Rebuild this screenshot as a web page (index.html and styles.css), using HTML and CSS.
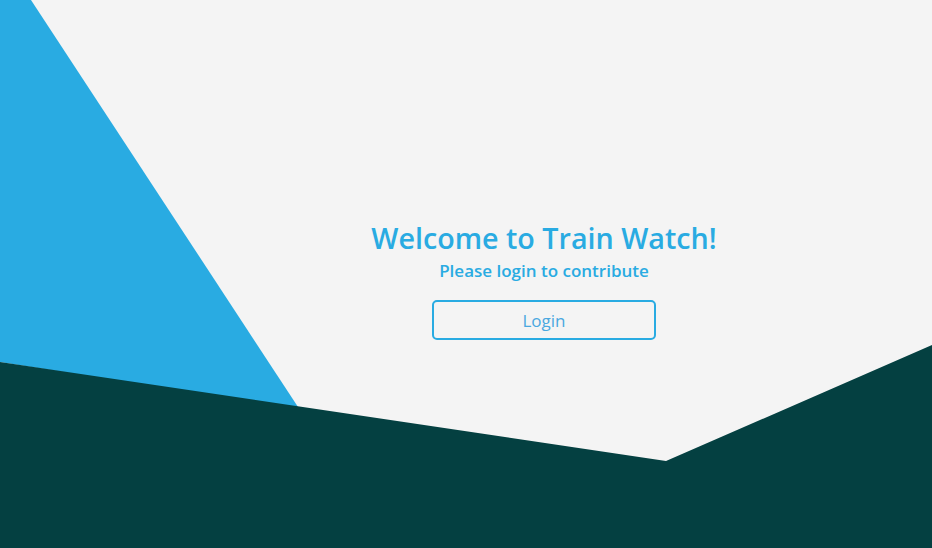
FILE: index.html
```html
<!DOCTYPE html>
<html>
<head>
<meta charset="utf-8">
<link rel="stylesheet" href="styles.css">
</head>
<body>
<div class="page">
  <svg class="bg" width="932" height="548" viewBox="0 0 932 548" xmlns="http://www.w3.org/2000/svg">
    <polygon points="0,0 31,0 300,410 0,362" fill="#29abe2"/>
    <polygon points="0,362 666,461 932,345 932,548 0,548" fill="#044041"/>
  </svg>
  <main class="content">
    <h1 class="title">Welcome to Train Watch!</h1>
    <p class="subtitle">Please login to contribute</p>
    <button class="login">Login</button>
  </main>
</div>
</body>
</html>
```
FILE: styles.css
```css
* { box-sizing: border-box; }
html, body { margin: 0; padding: 0; }
body {
  background: #f4f4f4;
  font-family: "Open Sans", "Noto Sans", sans-serif;
  overflow: hidden;
}
.page {
  position: relative;
  width: 932px;
  height: 548px;
}
.bg {
  position: absolute;
  left: 0;
  top: 0;
}
.content {
  position: relative;
  display: flex;
  flex-direction: column;
  align-items: center;
  padding-left: 156px;
  padding-top: 219px;
}
.title {
  margin: 0;
  font-size: 28.7px;
  font-weight: 600;
  color: #29abe2;
  line-height: 38px;
}
.subtitle {
  margin: 1px 0 0;
  font-size: 17px;
  font-weight: 600;
  color: #29abe2;
  line-height: 26px;
}
.login {
  margin-top: 16px;
  width: 224px;
  height: 40px;
  border: 2px solid #29abe2;
  border-radius: 5px;
  background: transparent;
  color: #4aa8e0;
  font-family: "Open Sans", "Noto Sans", sans-serif;
  font-size: 17px;
  font-weight: 400;
  padding: 0;
}
```
